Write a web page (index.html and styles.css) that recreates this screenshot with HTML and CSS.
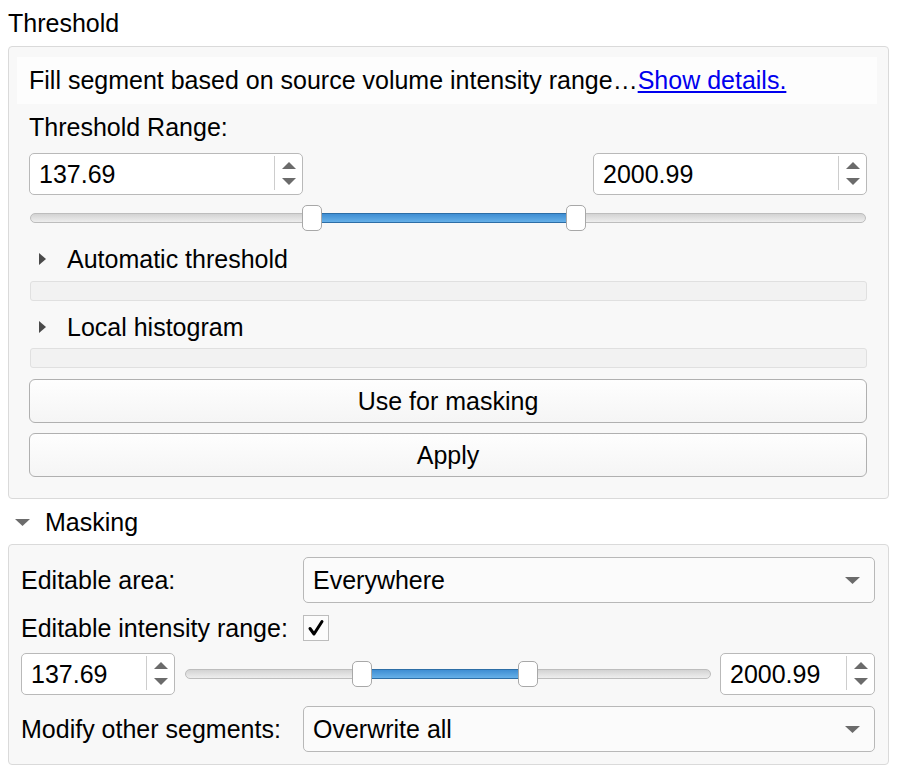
FILE: index.html
```html
<!DOCTYPE html>
<html>
<head>
<meta charset="utf-8">
<link rel="stylesheet" href="styles.css">
</head>
<body>
<div class="panel">
  <div class="title">Threshold</div>
  <div class="group thr">
    <div class="desc">Fill segment based on source volume intensity range…<a class="link" href="#">Show details.</a></div>
    <div class="label">Threshold Range:</div>
    <div class="spinrow">
      <div class="spin wide">
        <div class="val">137.69</div>
        <div class="arrows">
          <svg width="14" height="7" viewBox="0 0 14 7"><polygon points="0,7 7,0 14,7" fill="#6b6b6b"/></svg>
          <svg width="14" height="7" viewBox="0 0 14 7"><polygon points="0,0 14,0 7,7" fill="#6b6b6b"/></svg>
        </div>
      </div>
      <div class="spin wide">
        <div class="val">2000.99</div>
        <div class="arrows">
          <svg width="14" height="7" viewBox="0 0 14 7"><polygon points="0,7 7,0 14,7" fill="#6b6b6b"/></svg>
          <svg width="14" height="7" viewBox="0 0 14 7"><polygon points="0,0 14,0 7,7" fill="#6b6b6b"/></svg>
        </div>
      </div>
    </div>
    <div class="slider s1">
      <div class="track"></div>
      <div class="fill" style="left:282px;width:264px"></div>
      <div class="handle" style="left:272px"></div>
      <div class="handle" style="left:536px"></div>
    </div>
    <div class="coll first">
      <svg width="7" height="12" viewBox="0 0 7 12"><polygon points="0,0 7,6 0,12" fill="#4a4a4a"/></svg>
      <span>Automatic threshold</span>
    </div>
    <div class="bar"></div>
    <div class="coll second">
      <svg width="7" height="12" viewBox="0 0 7 12"><polygon points="0,0 7,6 0,12" fill="#4a4a4a"/></svg>
      <span>Local histogram</span>
    </div>
    <div class="bar bar2"></div>
    <button class="btn b1">Use for masking</button>
    <button class="btn b2">Apply</button>
  </div>
  <div class="mhead">
    <svg width="15" height="7" viewBox="0 0 15 7"><polygon points="0,0 15,0 7.5,7" fill="#6c6c6c"/></svg>
    <span>Masking</span>
  </div>
  <div class="group mask">
    <div class="mrow r1">
      <div class="mlabel">Editable area:</div>
      <div class="combo">
        <span>Everywhere</span>
        <svg width="15" height="7" viewBox="0 0 15 7"><polygon points="0,0 15,0 7.5,7" fill="#6b6b6b"/></svg>
      </div>
    </div>
    <div class="mrow r2">
      <div class="mlabel">Editable intensity range:</div>
      <div class="check">
        <svg width="18" height="18" viewBox="0 0 18 18"><polyline points="3,9.5 7,15 15,2.5" fill="none" stroke="#000" stroke-width="3" stroke-linecap="round" stroke-linejoin="round"/></svg>
      </div>
    </div>
    <div class="mrow r3">
      <div class="spin small">
        <div class="val">137.69</div>
        <div class="arrows">
          <svg width="14" height="7" viewBox="0 0 14 7"><polygon points="0,7 7,0 14,7" fill="#6b6b6b"/></svg>
          <svg width="14" height="7" viewBox="0 0 14 7"><polygon points="0,0 14,0 7,7" fill="#6b6b6b"/></svg>
        </div>
      </div>
      <div class="slider s2">
        <div class="track"></div>
        <div class="fill" style="left:177px;width:166px"></div>
        <div class="handle" style="left:167px"></div>
        <div class="handle" style="left:333px"></div>
      </div>
      <div class="spin small right">
        <div class="val">2000.99</div>
        <div class="arrows">
          <svg width="14" height="7" viewBox="0 0 14 7"><polygon points="0,7 7,0 14,7" fill="#6b6b6b"/></svg>
          <svg width="14" height="7" viewBox="0 0 14 7"><polygon points="0,0 14,0 7,7" fill="#6b6b6b"/></svg>
        </div>
      </div>
    </div>
    <div class="mrow r4">
      <div class="mlabel">Modify other segments:</div>
      <div class="combo">
        <span>Overwrite all</span>
        <svg width="15" height="7" viewBox="0 0 15 7"><polygon points="0,0 15,0 7.5,7" fill="#6b6b6b"/></svg>
      </div>
    </div>
  </div>
</div>
</body>
</html>
```
FILE: styles.css
```css
* { box-sizing: border-box; }
html, body { margin: 0; padding: 0; }
body {
  background: #ffffff;
  font-family: "Liberation Sans", Arial, sans-serif;
  font-size: 25px;
  color: #000;
  width: 902px;
  height: 776px;
  overflow: hidden;
}
.panel { padding: 0 13px 0 8px; }
.title { margin-top: 8px; height: 30px; line-height: 30px; }

.group {
  border: 1px solid #dadada;
  border-radius: 4px;
  background: #f8f8f8;
}
.thr { margin-top: 8px; padding: 10px 21px 21px 20px; }

.desc {
  margin: 0 -10px 0 -12px;
  height: 47px;
  padding-left: 12px;
  background: #fdfdfd;
  display: flex;
  align-items: center;
  white-space: nowrap;
}
.link { color: #0000ee; text-decoration: underline; }

.label { margin-top: 8px; height: 30px; line-height: 30px; }

.spinrow { display: flex; justify-content: space-between; margin-top: 11px; }
.spin {
  height: 42px;
  border: 1px solid #b9b9b9;
  border-radius: 5px;
  background: #fff;
  display: flex;
}
.spin.wide { width: 274px; }
.spin .val { flex: 1; padding-left: 9px; line-height: 40px; }
.spin .arrows {
  width: 28px;
  margin: 2px 0 4px;
  border-left: 1px solid #cdcdcd;
  display: flex;
  flex-direction: column;
  align-items: center;
  justify-content: center;
  gap: 9px;
}
.spin .arrows svg { display: block; }

.slider { position: relative; height: 26px; }
.slider.s1 { margin: 10px 0 0 1px; width: 836px; }
.track {
  position: absolute;
  left: 0; right: 0; top: 8px;
  height: 10px;
  border: 1px solid #bdbdbd;
  border-radius: 5px;
  background: linear-gradient(#d3d3d3, #eeeeee);
}
.fill {
  position: absolute;
  top: 8px;
  height: 10px;
  border: 1px solid #2d6ea6;
  background: linear-gradient(#3f8ed3, #66b0e8);
}
.handle {
  position: absolute;
  top: 0;
  width: 20px;
  height: 26px;
  background: #fff;
  border: 1px solid #a8a8a8;
  border-radius: 5px;
}

.coll { display: flex; align-items: center; height: 32px; padding-left: 10px; gap: 21px; }
.coll svg { display: block; }
.coll.first { margin-top: 12px; }
.coll.second { margin-top: 10px; }

.bar {
  height: 20px;
  margin: 6px 0 0 1px;
  border: 1px solid #e0e0e0;
  border-radius: 3px;
  background: #f2f2f2;
}
.bar.bar2 { margin-top: 5px; }

.btn {
  display: block;
  width: 100%;
  height: 44px;
  border: 1px solid #b0b0b0;
  border-radius: 6px;
  background: linear-gradient(#fefefe, #f5f5f5);
  font: inherit;
  color: #000;
  padding: 0;
}
.btn.b1 { margin-top: 11px; }
.btn.b2 { margin-top: 10px; }

.mhead { display: flex; align-items: center; height: 34px; margin-top: 6px; padding-left: 7px; gap: 15px; }
.mhead svg { display: block; }

.mask { margin-top: 5px; padding: 12px 13px 12px 12px; }
.mrow { display: flex; align-items: center; }
.mlabel { width: 282px; white-space: nowrap; }
.combo {
  flex: 1;
  height: 46px;
  border: 1px solid #b8b8b8;
  border-radius: 5px;
  background: #fbfbfb;
  display: flex;
  align-items: center;
  justify-content: space-between;
  padding: 0 14px 0 9px;
}
.combo svg { display: block; }
.r2 { margin-top: 5px; height: 40px; }
.check {
  width: 26px;
  height: 26px;
  border: 1px solid #bdbdbd;
  background: #fcfcfc;
  display: flex;
  align-items: center;
  justify-content: center;
}
.check svg { display: block; }
.r3 { margin-top: 5px; height: 42px; }
.spin.small { width: 154px; }
.spin.small.right { width: 155px; }
.slider.s2 { flex: 1; margin: 0 9px 0 10px; }
.r4 { margin-top: 11px; }
```
